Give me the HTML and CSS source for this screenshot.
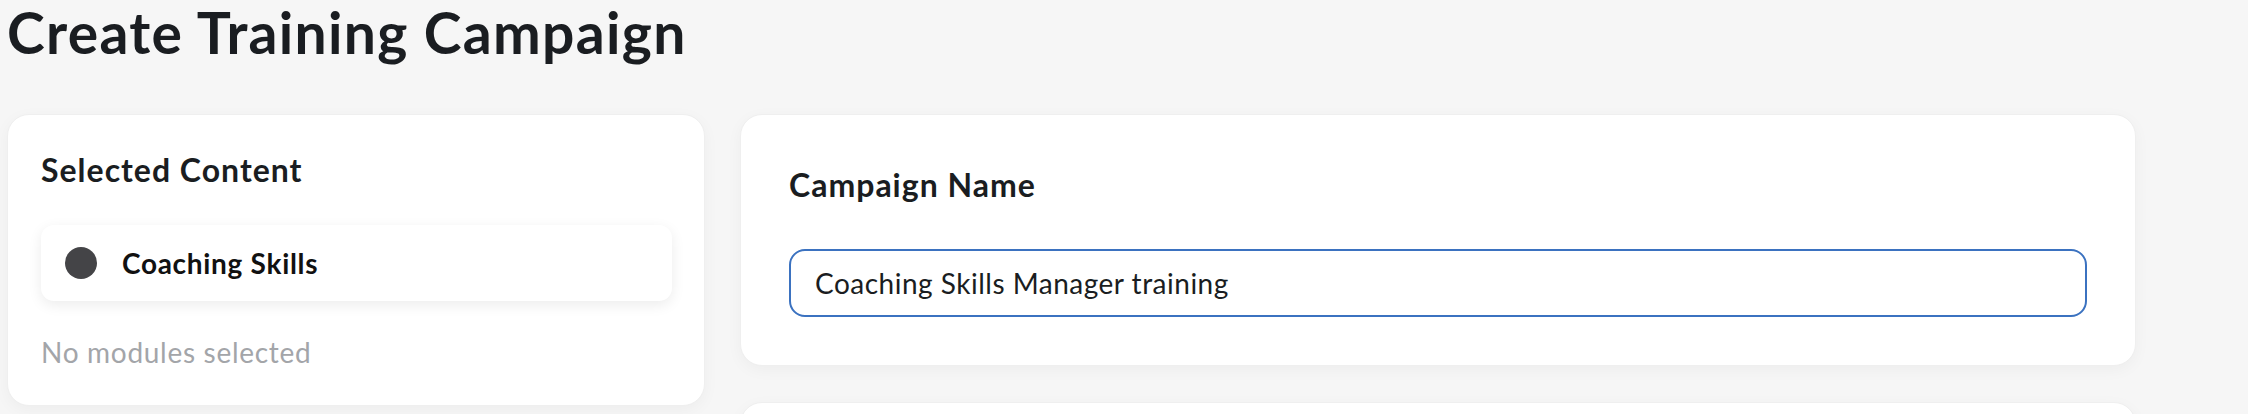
FILE: index.html
```html
<!DOCTYPE html>
<html lang="en">
<head>
    <meta charset="UTF-8">
    <meta name="viewport" content="width=device-width, initial-scale=1.0">
    <title>Create Training Campaign</title>
    <link rel="stylesheet" href="styles.css">
</head>
<body>
    <div class="page">
        <h1 class="page-title">Create Training Campaign</h1>

        <div class="layout">
            <aside class="card sidebar">
                <h2 class="card-title">Selected Content</h2>

                <div class="content-item">
                    <span class="content-dot"></span>
                    <span class="content-name">Coaching Skills</span>
                </div>

                <p class="empty-note">No modules selected</p>
            </aside>

            <main class="main-column">
                <section class="card form-card">
                    <label class="card-title" for="campaign_name">Campaign Name</label>
                    <input type="text" id="campaign_name" name="campaign_name" class="text-input" value="Coaching Skills Manager training">
                </section>

                <section class="card form-card next-card"></section>
            </main>
        </div>
    </div>
</body>
</html>
```

FILE: styles.css
```css
:root {
    --bg-color: #f6f6f6;
    --text-color: #1a1d21;
    --muted-color: #a3a5a9;
    --accent-color: #3b72c0;
    --dot-color: #444447;
}

* {
    margin: 0;
    padding: 0;
    box-sizing: border-box;
}

body {
    background-color: var(--bg-color);
    color: var(--text-color);
    font-family: 'Lato', 'Noto Sans', sans-serif;
}

.page {
    width: 2143px;
    padding: 0 7px;
}

.page-title {
    font-size: 57px;
    font-weight: 700;
    line-height: 64px;
    letter-spacing: 1.3px;
}

.layout {
    display: grid;
    grid-template-columns: 1fr 2fr;
    gap: 35px;
    margin-top: 50px;
    align-items: start;
}

.card {
    background-color: #fff;
    border: 1px solid #efefef;
    border-radius: 22px;
    box-shadow: 0 4px 16px rgba(0, 0, 0, 0.04);
}

.card-title {
    display: block;
    font-size: 32px;
    font-weight: 700;
    line-height: 38px;
    letter-spacing: 1px;
}

/* Colonne gauche */
.sidebar {
    padding: 36px 32px 35px 33px;
    min-height: 292px;
}

.content-item {
    display: flex;
    align-items: center;
    gap: 25px;
    height: 76px;
    margin-top: 36px;
    padding-left: 24px;
    background-color: #fff;
    border-radius: 13px;
    box-shadow: 0 4px 14px rgba(0, 0, 0, 0.08);
}

.content-dot {
    width: 32px;
    height: 32px;
    border-radius: 50%;
    background-color: var(--dot-color);
    flex-shrink: 0;
}

.content-name {
    font-size: 28px;
    font-weight: 700;
    letter-spacing: 0.7px;
    color: #111;
}

.empty-note {
    margin-top: 34px;
    font-size: 28px;
    line-height: 34px;
    letter-spacing: 0.7px;
    color: var(--muted-color);
}

/* Colonne principale */
.main-column {
    display: flex;
    flex-direction: column;
    gap: 36px;
}

.form-card {
    padding: 48px;
}

.form-card:first-child {
    padding-top: 51px;
    padding-bottom: 48px;
}

.text-input {
    display: block;
    width: 100%;
    height: 68px;
    margin-top: 45px;
    padding: 0 24px;
    border: 2px solid var(--accent-color);
    border-radius: 16px;
    font-family: inherit;
    font-size: 28px;
    letter-spacing: 0.5px;
    color: var(--text-color);
    background-color: #fff;
    outline: none;
}

.next-card {
    min-height: 200px;
}
```
